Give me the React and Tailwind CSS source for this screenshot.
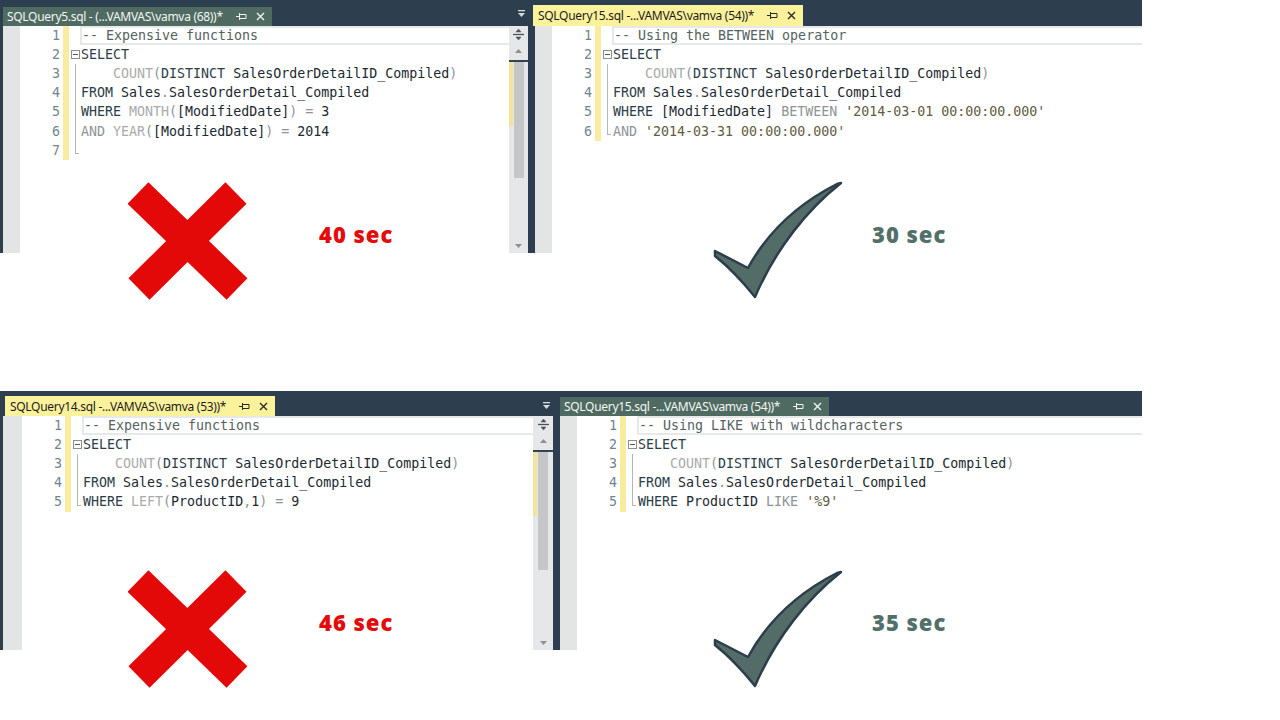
import React from 'react';

const MONO = { fontFamily: '"DejaVu Sans Mono", "Liberation Mono", monospace' };
const UI = { fontFamily: '"Noto Sans", "Open Sans", sans-serif' };
const BOLD = { fontFamily: '"Open Sans", "Noto Sans", sans-serif' };

const tone = {
  k: 'text-[#2c3d48]',
  t: 'text-[#1b2930]',
  f: 'text-[#a9abab]',
  o: 'text-[#8d9496]',
  c: 'text-[#55625f]',
  s: 'text-[#625b3c]',
};

const count = [['    '], ['COUNT', 'f'], ['(', 'o'], ['DISTINCT', 'k'], [' SalesOrderDetailID_Compiled', 't'], [')', 'o']];
const from = [['FROM', 'k'], [' Sales', 't'], ['.', 'o'], ['SalesOrderDetail_Compiled', 't']];

const q1 = [
  [['-- Expensive functions', 'c']],
  [['SELECT', 'k']],
  count,
  from,
  [['WHERE', 'k'], [' '], ['MONTH', 'f'], ['(', 'o'], ['[ModifiedDate]', 't'], [') = ', 'o'], ['3', 't']],
  [['AND', 'o'], [' '], ['YEAR', 'f'], ['(', 'o'], ['[ModifiedDate]', 't'], [') = ', 'o'], ['2014', 't']],
  [],
];

const q2 = [
  [['-- Using the BETWEEN operator', 'c']],
  [['SELECT', 'k']],
  count,
  from,
  [['WHERE', 'k'], [' [ModifiedDate] ', 't'], ['BETWEEN', 'o'], [' '], ["'2014-03-01 00:00:00.000'", 's']],
  [['AND', 'o'], [' '], ["'2014-03-31 00:00:00.000'", 's']],
];

const q3 = [
  [['-- Expensive functions', 'c']],
  [['SELECT', 'k']],
  count,
  from,
  [['WHERE', 'k'], [' '], ['LEFT', 'f'], ['(', 'o'], ['ProductID', 't'], [',', 'o'], ['1', 't'], [') = ', 'o'], ['9', 't']],
];

const q4 = [
  [['-- Using LIKE with wildcharacters', 'c']],
  [['SELECT', 'k']],
  count,
  from,
  [['WHERE', 'k'], [' ProductID ', 't'], ['LIKE', 'o'], [' '], ["'%9'", 's']],
];

function Pin({ color }) {
  return (
    <svg width="11" height="9" viewBox="0 0 11 9" fill="none" stroke={color} strokeWidth="1">
      <path d="M0 4.5h3M3.5 1v7M4 2.5h6v4H4" />
    </svg>
  );
}

function Close({ color }) {
  return (
    <svg width="9" height="9" viewBox="0 0 9 9" stroke={color} strokeWidth="1.4">
      <path d="M1 1l7 7M8 1l-7 7" />
    </svg>
  );
}

function Tab({ label, active }) {
  const c = active ? '#2a2a2a' : '#f2f4f3';
  return (
    <div
      className={
        active
          ? 'flex items-center h-[21px] mt-[5px] pl-[5px] pr-[7px] bg-[#fdf29c] text-[#1c1c1c]'
          : 'flex items-center h-[19px] mt-[7px] pl-[4px] pr-[7px] bg-[#4e6a61] text-[#f4f6f5]'
      }
      style={UI}
    >
      <span className="text-[12px] tracking-[-0.3px] whitespace-nowrap">{label}</span>
      <span className="ml-[13px] flex items-center"><Pin color={c} /></span>
      <span className="ml-[9px] flex items-center"><Close color={c} /></span>
    </div>
  );
}

function Dropdown() {
  return (
    <svg width="9" height="9" viewBox="0 0 9 9" fill="#d7dadc">
      <rect x="1" y="1" width="7" height="1.3" />
      <path d="M1 4h7L4.5 8z" />
    </svg>
  );
}

function Fold({ i, n }) {
  if (i === 0) return null;
  if (i === 1)
    return (
      <svg width="9" height="9" viewBox="0 0 9 9" className="ml-[2px]">
        <rect x="0.5" y="0.5" width="8" height="8" fill="#fff" stroke="#8a8f92" />
        <path d="M2 4.5h5" stroke="#555" />
      </svg>
    );
  return (
    <div className={i === n - 1 ? 'ml-[6px] w-[4px] border-l border-b border-[#b3b7b9] self-start h-[13px]' : 'ml-[6px] h-full border-l border-[#b3b7b9]'} />
  );
}

function Scrollbar({ thumb }) {
  return (
    <div className="flex flex-col w-full h-full bg-[#e6e7e8]">
      <div className="h-[17px] flex items-center justify-center">
        <svg width="11" height="13" viewBox="0 0 11 13" stroke="#4a5359" fill="#4a5359">
          <path d="M0 6.5h11" strokeWidth="1.3" />
          <path d="M5.5 1l-2.5 3h5zM5.5 12l-2.5-3h5z" strokeWidth="0.5" />
        </svg>
      </div>
      <div className="h-[16px] flex items-center justify-center">
        <svg width="7" height="4" viewBox="0 0 7 4" fill="#8b9094"><path d="M3.5 0L7 4H0z" /></svg>
      </div>
      <div className={`flex border-t-2 border-[#34444f] ${thumb}`}>
        <div className="w-[4px] h-[64px] bg-[#f3e49a]" />
        <div className="ml-[1px] w-[10px] bg-[#c4c6c8]" />
      </div>
      <div className="flex-1" />
      <div className="h-[12px] flex items-center justify-center mb-[1px]">
        <svg width="7" height="4" viewBox="0 0 7 4" fill="#8b9094"><path d="M0 0h7L3.5 4z" /></svg>
      </div>
    </div>
  );
}

function Editor({ lines, gutter, scroll, thumb }) {
  return (
    <div className="flex h-full bg-white">
      <div className={`${gutter} h-full bg-[#e3e4e4]`} />
      <div className="flex-1 flex flex-col">
        {lines.map((toks, i) => (
          <div key={i} className="flex h-[19.2px] items-center" style={MONO}>
            <div className="w-[40px] text-right text-[13.3px] text-[#6f858f]">{i + 1}</div>
            <div className="w-[3px]" />
            <div className="w-[6px] h-full bg-[#f9ec9f]" />
            <div className="w-[12px] h-full flex items-center">
              <Fold i={i} n={lines.length} />
            </div>
            <div
              className={
                i === 0
                  ? 'flex-1 h-full flex items-center whitespace-pre text-[13.3px] border-y-2 border-l-2 border-[#e7e8e8] -ml-[1px]'
                  : 'flex-1 h-full flex items-center whitespace-pre text-[13.3px]'
              }
            >
              {toks.map(([s, k], j) => (
                <span key={j} className={tone[k || 't']}>{s}</span>
              ))}
            </div>
          </div>
        ))}
      </div>
      {scroll && <div className={scroll}><Scrollbar thumb={thumb} /></div>}
    </div>
  );
}

function XMark() {
  return (
    <svg width="120" height="118" viewBox="0 0 120 118">
      <path d="M10 11L109 107M108 11L11 107" stroke="#e40909" strokeWidth="30" />
    </svg>
  );
}

function Check() {
  return (
    <svg width="135" height="125" viewBox="0 0 135 125">
      <path
        d="M5 73 L38 90 C50 68 74 33 127 6 L131 5 C98 31 66 70 45 119 C33 104 20 90 5 78 Z"
        fill="#536c67"
        stroke="#2c3d4b"
        strokeWidth="2.5"
        strokeLinejoin="round"
      />
    </svg>
  );
}

function Result({ bad, label, xTop, tTop, cTop }) {
  return (
    <>
      <div className="absolute left-[128px]" style={{ top: xTop }}><XMark /></div>
      <div className="absolute left-[319px] text-[22px] leading-[28px] font-extrabold tracking-[1px] text-[#e40b0b]" style={{ ...BOLD, top: tTop }}>{bad}</div>
      <div className="absolute left-[710px]" style={{ top: cTop }}><Check /></div>
      <div className="absolute left-[872px] text-[22px] leading-[28px] font-extrabold tracking-[1px] text-[#52706a]" style={{ ...BOLD, top: tTop }}>{label}</div>
    </>
  );
}

export default function App() {
  return (
    <div className="w-[1280px] h-[720px] bg-white flex flex-col overflow-hidden">
      <div className="relative h-[391px]">
        <div className="flex w-[1142px] h-[253px] bg-[#2d3e4f]">
          <div className="w-[528px] pl-[3px] flex flex-col">
            <div className="h-[26px] flex items-start justify-between pr-[2px]">
              <Tab label="SQLQuery5.sql - (...VAMVAS\vamva (68))*" />
              <div className="mt-[9px]"><Dropdown /></div>
            </div>
            <div className="flex-1">
              <Editor lines={q1} gutter="w-[17px]" scroll="w-[19px] h-full" thumb="h-[118px] mt-[1px]" />
            </div>
          </div>
          <div className="w-[5px]" />
          <div className="flex-1 flex flex-col">
            <div className="h-[26px] flex items-start">
              <Tab label="SQLQuery15.sql -...VAMVAS\vamva (54))*" active />
            </div>
            <div className="flex-1 ml-[2px]">
              <Editor lines={q2} gutter="w-[17px]" />
            </div>
          </div>
        </div>
        <Result bad="40 sec" label="30 sec" xTop={182} tTop={220} cTop={178} />
      </div>

      <div className="relative h-[329px]">
        <div className="flex w-[1142px] h-[259px] bg-[#2d3e4f]">
          <div className="w-[553px] pl-[3px] flex flex-col">
            <div className="h-[25px] flex items-start justify-between pr-[2px]">
              <div className="ml-[2px]"><Tab label="SQLQuery14.sql -...VAMVAS\vamva (53))*" active /></div>
              <div className="mt-[10px]"><Dropdown /></div>
            </div>
            <div className="flex-1">
              <Editor lines={q3} gutter="w-[19px]" scroll="w-[20px] h-full" thumb="h-[120px] mt-[1px]" />
            </div>
          </div>
          <div className="w-[7px]" />
          <div className="flex-1 flex flex-col">
            <div className="h-[25px] flex items-start">
              <div className="-mt-[1px]"><Tab label="SQLQuery15.sql -...VAMVAS\vamva (54))*" /></div>
            </div>
            <div className="flex-1">
              <Editor lines={q4} gutter="w-[17px]" />
            </div>
          </div>
        </div>
        <Result bad="46 sec" label="35 sec" xTop={179} tTop={217} cTop={176} />
      </div>
    </div>
  );
}
